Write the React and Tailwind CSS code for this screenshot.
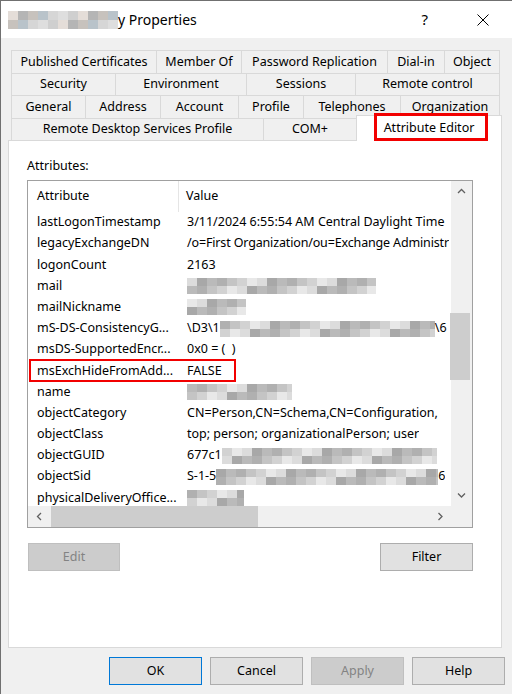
import React from 'react'

const GRAYS = [
  'bg-[#c4c4c4]',
  'bg-[#dcdcdc]',
  'bg-[#b0b0b0]',
  'bg-[#e8e8e8]',
  'bg-[#bababa]',
  'bg-[#d2d2d2]',
  'bg-[#a8a8a8]',
]

const TITLE_TONES = [
  'bg-[#e4ddd8]',
  'bg-[#b9c3ca]',
  'bg-[#cfcfcf]',
  'bg-[#c7c2bd]',
  'bg-[#dedede]',
  'bg-[#b5b5b5]',
  'bg-[#d6d6d6]',
]

function Mosaic({ w, h = 16, seed = 0, tones = GRAYS }) {
  const n = Math.ceil(w / 10)
  return (
    <div className="flex flex-col overflow-hidden shrink-0" style={{ width: w, height: h }}>
      {[0, 1].map(r => (
        <div key={r} className="flex flex-1">
          {Array.from({ length: n }).map((_, i) => (
            <div key={i} className={`w-[10px] shrink-0 ${tones[(i * 5 + r * 3 + seed) % tones.length]}`} />
          ))}
        </div>
      ))}
    </div>
  )
}

const TAB_ROWS = [
  [['Published Certificates', 'w-[145px]'], ['Member Of', 'w-[85px]'], ['Password Replication', 'w-[146px]'], ['Dial-in', 'w-[57px]'], ['Object', 'w-[56px]']],
  [['Security', 'w-[104px]'], ['Environment', 'w-[131px]'], ['Sessions', 'w-[109px]'], ['Remote control', 'w-[145px]']],
  [['General', 'w-[74px]'], ['Address', 'w-[75px]'], ['Account', 'w-[78px]'], ['Profile', 'w-[65px]'], ['Telephones', 'w-[97px]'], ['Organization', 'w-[100px]']],
]

const ROWS = [
  ['lastLogonTimestamp', ['3/11/2024 6:55:54 AM Central Daylight Time']],
  ['legacyExchangeDN', [{ t: '/o=First Organization/ou=Exchange Administr', tight: true }]],
  ['logonCount', ['2163']],
  ['mail', [{ m: 189, seed: 1 }]],
  ['mailNickname', [{ m: 59, seed: 3 }]],
  ['mS-DS-ConsistencyG...', ['\\D3\\1', { m: 215, seed: 2 }, '\\6']],
  ['msDS-SupportedEncr...', ['0x0 = (  )']],
  ['msExchHideFromAdd...', ['FALSE'], true],
  ['name', [{ m: 105, seed: 4 }]],
  ['objectCategory', ['CN=Person,CN=Schema,CN=Configuration,']],
  ['objectClass', ['top; person; organizationalPerson; user']],
  ['objectGUID', ['677c1', { m: 215, seed: 5 }]],
  ['objectSid', ['S-1-5', { m: 222, seed: 6 }, '6']],
  ['physicalDeliveryOffice...', [{ m: 57, seed: 2 }]],
]

function Chevron({ dir }) {
  const pts = {
    up: '1,5 4.5,1.5 8,5',
    down: '1,1.5 4.5,5 8,1.5',
    left: '5,1 1.5,4.5 5,8',
    right: '1.5,1 5,4.5 1.5,8',
  }[dir]
  const vert = dir === 'up' || dir === 'down'
  return (
    <svg width={vert ? 9 : 7} height={vert ? 7 : 9} viewBox={vert ? '0 0 9 7' : '0 0 7 9'}>
      <polyline points={pts} fill="none" stroke="#606060" strokeWidth="1.3" />
    </svg>
  )
}

function Button({ children, disabled, primary, className = '' }) {
  const look = disabled
    ? 'bg-[#cccccc] border-[#bfbfbf] text-[#838383]'
    : primary
      ? 'bg-[#e1e1e1] border-[#0078d7] text-black'
      : 'bg-[#e1e1e1] border-[#adadad] text-black'
  return (
    <div className={`h-[28px] border flex items-center justify-center text-[12.5px] ${look} ${className}`}>
      {children}
    </div>
  )
}

export default function App() {
  return (
    <div className="w-[512px] h-[694px] bg-[#f0f0f0] border-l border-t border-[#707070] flex flex-col font-['Noto_Sans',sans-serif] text-black overflow-hidden">
      {/* title bar */}
      <div className="h-[37px] bg-white flex items-center pl-[7px] shrink-0">
        <Mosaic w={110} h={18} tones={TITLE_TONES} />
        <span className="text-[14px] leading-none">y Properties</span>
        <span className="ml-auto text-[15px] leading-none mr-[49px]">?</span>
        <svg width="12" height="12" viewBox="0 0 12 12" className="mr-[23px]">
          <path d="M0.5 0.5 L11.5 11.5 M11.5 0.5 L0.5 11.5" stroke="#000" strokeWidth="1" />
        </svg>
      </div>

      {/* body */}
      <div className="flex-1 flex flex-col pt-[12px]">
        <div className="ml-[10px] flex flex-col text-[12.5px]">
          {TAB_ROWS.map((row, ri) => (
            <div key={ri} className={`flex ${ri === 1 ? 'h-[22px]' : 'h-[23px]'}`}>
              {row.map(([label, w], i) => (
                <div
                  key={label}
                  className={`${w} border-l border-t border-[#d9d9d9] flex items-center justify-center whitespace-nowrap ${i === row.length - 1 ? 'border-r' : ''}`}
                >
                  {label}
                </div>
              ))}
            </div>
          ))}
          <div className="flex h-[22px] items-end">
            <div className="w-[252px] h-[22px] border-l border-t border-[#d9d9d9] flex items-center justify-center whitespace-nowrap">
              Remote Desktop Services Profile
            </div>
            <div className="w-[93px] h-[22px] border-l border-t border-[#d9d9d9] flex items-center justify-center">
              COM+
            </div>
            <div className="relative z-10 w-[146px] h-[26px] -mb-[1px] bg-white border-l border-t border-r border-[#d9d9d9] flex items-center justify-center whitespace-nowrap">
              Attribute Editor
              <div className="absolute left-[17px] top-[-3px] w-[114px] h-[28px] border-[3px] border-[#f20000]" />
            </div>
          </div>
        </div>

        {/* panel */}
        <div className="ml-[7px] w-[494px] h-[508px] bg-white border border-[#d9d9d9] flex flex-col text-[12.5px] shrink-0">
          <div className="ml-[18px] pt-[16px] h-[39px]">Attributes:</div>

          <div className="ml-[18px] w-[446px] h-[348px] border border-[#a0a0a0] flex">
            <div className="w-[423px] flex flex-col">
              <div className="h-[325px] flex flex-col overflow-hidden">
                <div className="h-[31px] flex shrink-0">
                  <div className="w-[151px] pl-[9px] flex items-center border-r border-[#e5e5e5]">Attribute</div>
                  <div className="pl-[7px] flex items-center">Value</div>
                </div>
                {ROWS.map(([name, parts, boxed]) => (
                  <div key={name} className="relative h-[21.2px] flex items-center shrink-0 whitespace-pre">
                    <div className="w-[151px] pl-[9px] shrink-0 overflow-hidden">{name}</div>
                    <div className="pl-[8px] flex items-center overflow-hidden">
                      {parts.map((p, i) =>
                        typeof p === 'string'
                          ? <span key={i} className="shrink-0">{p}</span>
                          : p.t
                            ? <span key={i} className="shrink-0 tracking-[-0.15px]">{p.t}</span>
                            : <Mosaic key={i} w={p.m} seed={p.seed} />
                      )}
                    </div>
                    {boxed && (
                      <div className="absolute left-[1px] top-[-1px] w-[207px] h-[23px] border-[2.5px] border-[#f20000]" />
                    )}
                  </div>
                ))}
              </div>
              {/* horizontal scrollbar */}
              <div className="h-[21px] bg-[#f0f0f0] flex items-center">
                <div className="w-[23px] flex justify-center"><Chevron dir="left" /></div>
                <div className="w-[207px] h-[21px] bg-[#cdcdcd]" />
                <div className="ml-auto w-[21px] flex justify-center"><Chevron dir="right" /></div>
              </div>
            </div>
            {/* vertical scrollbar */}
            <div className="w-[21px] bg-[#f0f0f0] flex flex-col">
              <div className="h-[21px] flex items-center justify-center"><Chevron dir="up" /></div>
              <div className="flex-1">
                <div className="mt-[111px] ml-[-1px] w-[20px] h-[67px] bg-[#cdcdcd]" />
              </div>
              <div className="h-[21px] flex items-center justify-center"><Chevron dir="down" /></div>
              <div className="h-[21px]" />
            </div>
          </div>

          <div className="mt-[15px] pl-[19px] pr-[28px] flex justify-between">
            <Button disabled className="w-[92px]">Edit</Button>
            <Button className="w-[93px]">Filter</Button>
          </div>
        </div>

        <div className="mt-[9px] pr-[7px] flex justify-end gap-[8px]">
          <Button primary className="w-[93px]">OK</Button>
          <Button className="w-[93px]">Cancel</Button>
          <Button disabled className="w-[93px]">Apply</Button>
          <Button className="w-[93px]">Help</Button>
        </div>
      </div>
    </div>
  )
}
